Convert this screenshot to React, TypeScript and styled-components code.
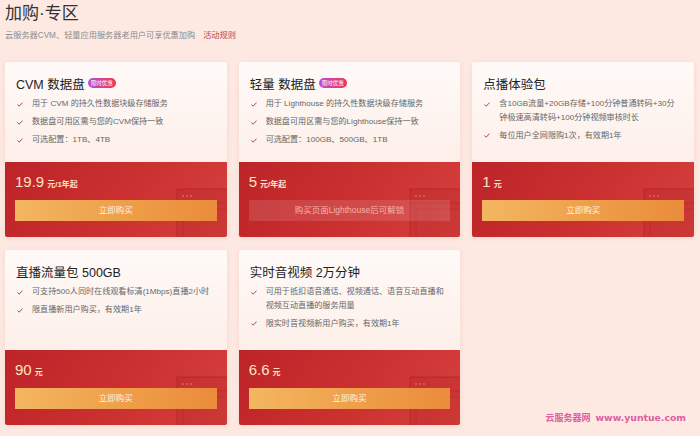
import React from 'react'
import styled, { createGlobalStyle } from 'styled-components'

const GlobalStyle = createGlobalStyle`
  html, body {
    margin: 0;
    padding: 0;
    background: #fde9e2;
  }
  body {
    font-family: "Liberation Sans", "Noto Sans CJK SC", sans-serif;
  }
  * {
    box-sizing: border-box;
  }
`

const Page = styled.div`
  position: relative;
  width: 700px;
  height: 436px;
  padding: 3px 6px 0 5px;
  overflow: hidden;
  background: #fde9e2;
`

const Title = styled.h1`
  margin: 0;
  font-size: 17px;
  line-height: 22px;
  font-weight: 400;
  color: #333;
`

const SubTitle = styled.p`
  margin: 5px 0 0;
  font-size: 8.2px;
  line-height: 12px;
  color: #8c8c8c;
  span {
    margin-left: 8px;
    color: #b4484a;
  }
`

const Grid = styled.div`
  display: grid;
  grid-template-columns: repeat(3, 1fr);
  gap: 13px 12px;
  margin-top: 20px;
`

const Card = styled.div`
  display: flex;
  flex-direction: column;
  height: 175px;
  border-radius: 2px;
  overflow: hidden;
  box-shadow: 0 1px 4px rgba(190, 90, 70, 0.15);
`

const CardTop = styled.div`
  flex: 1;
  padding: 13px 4px 0 11px;
  background: linear-gradient(180deg, #fffaf8 0%, #fdefe9 100%);
`

const CardTitle = styled.div`
  display: flex;
  align-items: center;
  height: 16px;
  font-size: 12.5px;
  color: #222;
`

const Badge = styled.span`
  margin-left: 3px;
  height: 10px;
  padding: 0 3px;
  border-radius: 5px;
  background: linear-gradient(90deg, #b84fe0, #f0384a);
  font-size: 5.5px;
  line-height: 10px;
  color: #fff;
`

const FeatureList = styled.ul`
  list-style: none;
  margin: 6px 0 0;
  padding: 0;
`

const Feature = styled.li`
  display: flex;
  margin-top: 4.5px;
  font-size: 8.1px;
  line-height: 13.5px;
  color: #666;
  white-space: pre;
  svg {
    flex-shrink: 0;
    margin: 4.5px 9px 0 1px;
  }
`

const RedArea = styled.div`
  position: relative;
  height: 75px;
  padding: 11px 10px 16px;
  overflow: hidden;
  background: linear-gradient(120deg, #bd2428 0%, #cc3131 55%, #d4403d 100%);
`

const Decoration = styled.svg`
  position: absolute;
  right: -4px;
  bottom: -4px;
`

const PriceRow = styled.div`
  position: relative;
  display: flex;
  align-items: baseline;
  height: 18px;
  color: #fde2c4;
  strong {
    font-size: 15px;
    line-height: 18px;
    font-weight: 400;
  }
  small {
    margin-left: 3px;
    font-size: 8px;
    font-weight: 700;
  }
`

const BuyButton = styled.div<{ $locked?: boolean }>`
  position: relative;
  margin-top: 9px;
  height: 21px;
  line-height: 21px;
  text-align: center;
  font-size: 8.5px;
  color: ${p => (p.$locked ? '#f4b2a6' : '#fff3e4')};
  background: ${p =>
    p.$locked
      ? 'rgba(255, 255, 255, 0.12)'
      : 'linear-gradient(90deg, #f4b661 0%, #ee9c47 60%, #ea8c3b 100%)'};
`

const Watermark = styled.div`
  position: absolute;
  right: 14px;
  bottom: 12px;
  font-family: "DejaVu Sans", "Noto Sans CJK SC", sans-serif;
  font-size: 9.3px;
  font-weight: 700;
  color: #de5ea1;
  span {
    margin-right: 5px;
    font-size: 9px;
    font-family: "Noto Sans CJK SC", sans-serif;
  }
`

const Check = () => (
  <svg width="6" height="5" viewBox="0 0 6 5">
    <polyline points="0.5,2.5 2.2,4.2 5.5,0.6" fill="none" stroke="#b24a45" strokeWidth="1" />
  </svg>
)

const WindowArt = () => (
  <Decoration width="60" height="56" viewBox="0 0 60 56">
    <rect x="6" y="4" width="60" height="60" fill="rgba(150,10,15,0.12)" stroke="rgba(120,0,5,0.25)" strokeWidth="1" />
    <line x1="6" y1="18" x2="60" y2="18" stroke="rgba(120,0,5,0.16)" strokeWidth="1" />
    <circle cx="12" cy="11" r="1.1" fill="rgba(255,200,190,0.3)" />
    <circle cx="16" cy="11" r="1.1" fill="rgba(255,200,190,0.3)" />
    <circle cx="20" cy="11" r="1.1" fill="rgba(255,200,190,0.3)" />
    <rect x="12" y="24" width="60" height="40" fill="none" stroke="rgba(120,0,5,0.14)" strokeWidth="1" />
  </Decoration>
)

type Product = {
  title: string
  badge?: boolean
  features: string[]
  price: string
  unit: string
  button: string
  locked?: boolean
}

const products: Product[] = [
  {
    title: 'CVM 数据盘',
    badge: true,
    features: ['用于 CVM 的持久性数据块级存储服务', '数据盘可用区需与您的CVM保持一致', '可选配置：1TB、4TB'],
    price: '19.9',
    unit: '元/1年起',
    button: '立即购买',
  },
  {
    title: '轻量 数据盘',
    badge: true,
    features: ['用于 Lighthouse 的持久性数据块级存储服务', '数据盘可用区需与您的Lighthouse保持一致', '可选配置：100GB、500GB、1TB'],
    price: '5',
    unit: '元/年起',
    button: '购买页面Lighthouse后可解锁',
    locked: true,
  },
  {
    title: '点播体验包',
    features: ['含10GB流量+20GB存储+100分钟普通转码+30分\n钟极速高清转码+100分钟视频审核时长', '每位用户全网限购1次，有效期1年'],
    price: '1',
    unit: '元',
    button: '立即购买',
  },
  {
    title: '直播流量包 500GB',
    features: ['可支持500人同时在线观看标清(1Mbps)直播2小时', '限直播新用户购买，有效期1年'],
    price: '90',
    unit: '元',
    button: '立即购买',
  },
  {
    title: '实时音视频 2万分钟',
    features: ['可用于抵扣语音通话、视频通话、语音互动直播和\n视频互动直播的服务用量', '限实时音视频新用户购买，有效期1年'],
    price: '6.6',
    unit: '元',
    button: '立即购买',
  },
]

export default function App() {
  return (
    <>
      <GlobalStyle />
      <Page>
        <Title>加购·专区</Title>
        <SubTitle>
          云服务器CVM、轻量应用服务器老用户可享优惠加购<span>活动规则</span>
        </SubTitle>
        <Grid>
          {products.map(p => (
            <Card key={p.title}>
              <CardTop>
                <CardTitle>
                  {p.title}
                  {p.badge && <Badge>限时优惠</Badge>}
                </CardTitle>
                <FeatureList>
                  {p.features.map(f => (
                    <Feature key={f}>
                      <Check />
                      <span>{f}</span>
                    </Feature>
                  ))}
                </FeatureList>
              </CardTop>
              <RedArea>
                <WindowArt />
                <PriceRow>
                  <strong>{p.price}</strong>
                  <small>{p.unit}</small>
                </PriceRow>
                <BuyButton $locked={p.locked}>{p.button}</BuyButton>
              </RedArea>
            </Card>
          ))}
        </Grid>
        <Watermark>
          <span>云服务器网</span>www.yuntue.com
        </Watermark>
      </Page>
    </>
  )
}
